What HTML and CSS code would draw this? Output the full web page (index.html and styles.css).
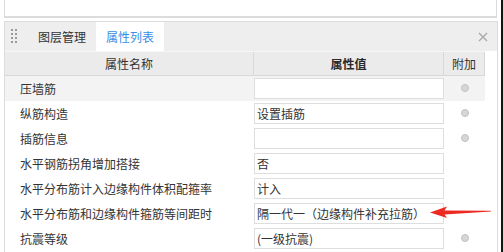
FILE: index.html
```html
<!DOCTYPE html>
<html lang="zh-CN">
<head>
<meta charset="utf-8">
<title>属性列表</title>
<link rel="stylesheet" href="styles.css">
</head>
<body>
<div class="screen">
  <div class="main">
    <div class="topbox"></div>
    <div class="panel">
      <div class="tabbar">
        <div class="grip">
          <span></span><span></span><span></span><span></span>
          <span></span><span></span><span></span><span></span>
        </div>
        <div class="tab">图层管理</div>
        <div class="tab active">属性列表</div>
        <div class="spacer"></div>
        <svg class="close" width="10" height="10" viewBox="0 0 10 10"><path d="M1 1 L9 9 M9 1 L1 9" stroke="#a8a8a8" stroke-width="1.3" fill="none"/></svg>
      </div>
      <div class="grid">
        <div class="row head">
          <div class="cell">属性名称</div>
          <div class="cell strong">属性值</div>
          <div class="cell">附加</div>
        </div>
        <div class="row sel">
          <div class="label">压墙筋</div>
          <div class="val"><div class="box"></div></div>
          <div class="extra"><span class="radio"></span></div>
        </div>
        <div class="row">
          <div class="label">纵筋构造</div>
          <div class="val"><div class="box">设置插筋</div></div>
          <div class="extra"><span class="radio"></span></div>
        </div>
        <div class="row">
          <div class="label">插筋信息</div>
          <div class="val"><div class="box"></div></div>
          <div class="extra"><span class="radio"></span></div>
        </div>
        <div class="row">
          <div class="label">水平钢筋拐角增加搭接</div>
          <div class="val"><div class="box">否</div></div>
          <div class="extra"></div>
        </div>
        <div class="row">
          <div class="label">水平分布筋计入边缘构件体积配箍率</div>
          <div class="val"><div class="box">计入</div></div>
          <div class="extra"></div>
        </div>
        <div class="row">
          <div class="label">水平分布筋和边缘构件箍筋等间距时</div>
          <div class="val"><div class="box">隔一代一（边缘构件补充拉筋）</div></div>
          <div class="extra"></div>
        </div>
        <div class="row">
          <div class="label">抗震等级</div>
          <div class="val"><div class="box">(一级抗震)</div></div>
          <div class="extra"><span class="radio"></span></div>
        </div>
      </div>
    </div>
    <svg class="arrow" width="70" height="16" viewBox="0 0 70 16">
      <polygon points="0,8.5 17,2.5 14.5,6.6 61,6.8 61,7.6 14.5,10.6 17,14" fill="#ec2a21"/>
    </svg>
  </div>
  <div class="edge"></div>
</div>
</body>
</html>
```

FILE: styles.css
```css
* { box-sizing: border-box; }
html, body { margin: 0; padding: 0; background: #fff; }
body {
  width: 503px;
  height: 252px;
  overflow: hidden;
  font-family: "Noto Sans CJK SC", "Microsoft YaHei", sans-serif;
  font-size: 12px;
  color: #333;
}
.screen { display: flex; height: 252px; }
.main { width: 501px; position: relative; }
.edge { width: 2px; background: #141414; }

.topbox {
  margin-left: 4px;
  width: 493px;
  height: 18px;
  border: 1px solid #dcdcdc;
  border-top: none;
  border-bottom-width: 2px;
  background: #fff;
}

.panel {
  margin: 3px 0 0 4px;
  width: 494px;
  height: 231px;
  border: 1px solid #dcdcdc;
  border-bottom: none;
}

.tabbar {
  height: 29px;
  background: #eeeeef;
  display: flex;
  align-items: stretch;
}
.grip {
  width: 6px;
  margin: 7px 11px 0 6px;
  display: grid;
  grid-template-columns: 2px 2px;
  grid-auto-rows: 2px;
  column-gap: 2px;
  row-gap: 2px;
  height: 14px;
}
.grip span { background: #9a9a9a; }
.tab {
  width: 68px;
  padding: 0 10px;
  line-height: 29px;
  font-size: 12px;
  color: #333;
  text-align: center;
}
.tab.active { background: #fff; color: #3a8ee6; }
.spacer { flex: 1; }
.close { align-self: center; margin-right: 9px; margin-top: 1px; }

.grid { width: 480px; }
.row {
  display: grid;
  grid-template-columns: 249px 190px 41px;
  height: 25px;
}
.row.head {
  background: #ebebeb;
  border-top: 1px solid #f6f6f6;
  border-bottom: 1px solid #d8d8d8;
}
.row.head .cell {
  text-align: center;
  line-height: 23px;
  border-right: 1px solid #d8d8d8;
  color: #333;
}
.row.head .cell.strong { font-weight: bold; color: #2a2a2a; }
.row.sel { background: #f3f3f3; }
.label { padding-left: 15px; line-height: 25px; white-space: nowrap; }
.val { padding-top: 2px; }
.box {
  height: 21px;
  border: 1px solid #dedede;
  background: #fff;
  padding-left: 2px;
  line-height: 19px;
  white-space: nowrap;
  overflow: hidden;
}
.extra { display: flex; justify-content: center; align-items: center; padding-bottom: 1px; }
.radio {
  width: 8px;
  height: 8px;
  border-radius: 50%;
  background: #d6d6d6;
  border: 1px solid #c2c2c2;
}

.arrow { position: absolute; left: 430px; top: 204px; }
```
